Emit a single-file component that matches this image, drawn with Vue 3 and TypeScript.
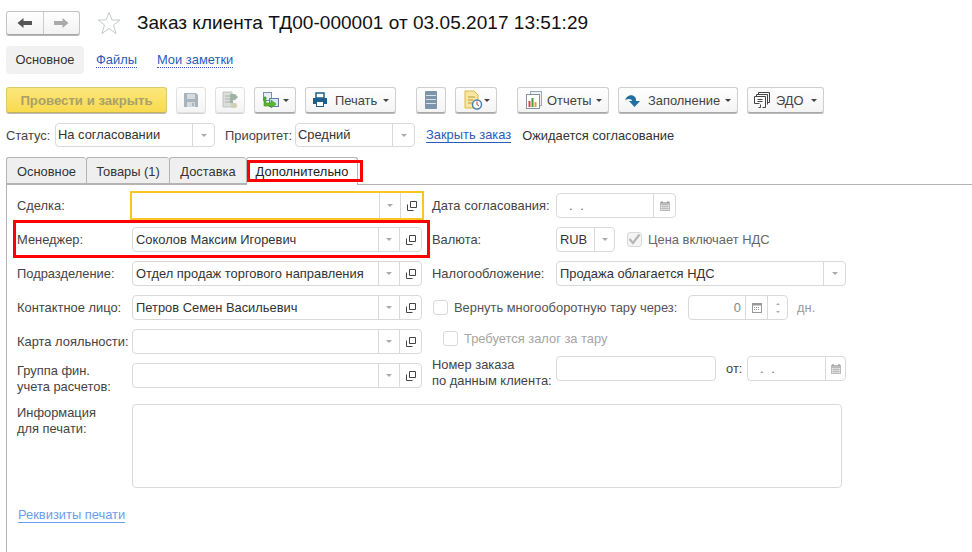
<script setup lang="ts">
const tabs = [
  { label: 'Основное', w: 80 },
  { label: 'Товары (1)', w: 83 },
  { label: 'Доставка', w: 77 },
]
</script>

<template>
  <div class="page">
    <header class="head">
      <div class="nav">
        <button class="nav-btn">
          <svg width="16" height="12" viewBox="0 0 16 12"><path d="M0.5 6 6.5 1V4H15V8H6.500V11Z" fill="#555" /></svg>
        </button>
        <button class="nav-btn">
          <svg width="16" height="12" viewBox="0 0 16 12"><path d="M15.500 6 9.500 1V4H1V8H9.500V11Z" fill="#aaa" /></svg>
        </button>
      </div>
      <svg class="star" width="24" height="24" viewBox="0 0 24 24"><path d="M12 1.500 15 9H23L16.500 14 19 22.500 12 17.500 5 22.500 7.500 14 1 9H9Z" fill="#fff" stroke="#c4c9cc" stroke-width="1" /></svg>
      <h1 class="title">Заказ клиента ТД00-000001 от 03.05.2017 13:51:29</h1>
    </header>

    <nav class="subnav">
      <span class="sub-active">Основное</span>
      <a class="sub-link l1">Файлы</a>
      <a class="sub-link l2">Мои заметки</a>
    </nav>

    <div class="toolbar">
      <button class="btn primary">Провести и закрыть</button>
      <button class="btn icon disabled b-save">
        <svg width="16" height="16" viewBox="0 0 16 16"><path d="M1 1H13L15 3V15H1Z" fill="#a9b3bc" /><rect x="4" y="2" width="8" height="5" fill="#d5dade" /><rect x="4" y="10" width="8" height="5" fill="#d5dade" /><rect x="9" y="11" width="2" height="3" fill="#a9b3bc" /></svg>
      </button>
      <button class="btn icon disabled b-doc">
        <svg width="18" height="18" viewBox="0 0 18 18"><path d="M2 1H11V16H2Z" fill="#d9dedb" stroke="#bcc4c0" /><path d="M4 5H9M4 8H9M4 11H9" stroke="#aab2ae" /><path d="M9 3H14L17 6 14 9H12V12H9Z" fill="#9fb4a6" /><rect x="10" y="12" width="6" height="5" rx="2" fill="#d2cfb4" /></svg>
      </button>
      <button class="btn drop b-link">
        <svg width="18" height="18" viewBox="0 0 18 18"><rect x="1.500" y="1.500" width="8" height="8" fill="#e9eef5" stroke="#7f8fa6" /><rect x="7.500" y="7.500" width="9" height="8" fill="#d9e6f5" stroke="#5b7fa6" /><path d="M4 6V12H9V9L14 13 9 17V15H2V6Z" fill="#58b82e" stroke="#3a8a1a" stroke-width=".6" /></svg>
        <i class="caret" />
      </button>
      <button class="btn drop b-print">
        <svg width="16" height="16" viewBox="0 0 16 16"><rect x="4" y="1" width="8" height="5" fill="#fff" stroke="#1f5f8b" stroke-width="1.500" /><path d="M1 6H15V12H12V9H4V12H1Z" fill="#1f5f8b" /><rect x="4.500" y="9.500" width="7" height="5" fill="#fff" stroke="#1f5f8b" /></svg>
        <span class="b-text">Печать</span>
        <i class="caret" />
      </button>
      <button class="btn icon b-menu">
        <svg width="14" height="20" viewBox="0 0 14 20"><rect x="1" y="1" width="12" height="18" rx="1" fill="#7d95ab" /><path d="M2 5.500H12M2 9.500H12M2 13.500H12" stroke="#d8e2ea" /></svg>
      </button>
      <button class="btn drop b-file">
        <svg width="20" height="20" viewBox="0 0 20 20"><path d="M2 1H11L15 5V18H2Z" fill="#f7e6a0" stroke="#d9b84a" /><path d="M5 7H12M5 10H10M5 13H9" stroke="#b99a3a" /><circle cx="14" cy="14.500" r="4.500" fill="#fff" stroke="#4a80b5" stroke-width="1.500" /><path d="M14 11.500V14.500L16 16" stroke="#c0392b" fill="none" /></svg>
        <i class="caret" />
      </button>
      <button class="btn drop b-rep">
        <svg width="20" height="20" viewBox="0 0 20 20"><rect x="6.500" y="1.500" width="11" height="14" fill="#eef1f5" stroke="#9aa7b5" /><rect x="2.500" y="4.500" width="13" height="14" fill="#fff" stroke="#8293a5" /><rect x="4.500" y="11" width="2" height="6" fill="#d04a3a" /><rect x="7.500" y="8" width="2" height="9" fill="#4d9a3a" /><rect x="10.500" y="12" width="2" height="5" fill="#d9a52e" /></svg>
        <span class="b-text t-rep">Отчеты</span>
        <i class="caret" />
      </button>
      <button class="btn drop b-fill">
        <svg width="16" height="15" viewBox="0 0 16 15"><path d="M0 7C2 2 7 1 10 4 11 5 11 6 11 8H15L9.500 14 4 8H7C7 6 4 5 0 7Z" fill="#1f6f9f" /></svg>
        <span class="b-text">Заполнение</span>
        <i class="caret" />
      </button>
      <button class="btn drop b-edo">
        <svg width="18" height="18" viewBox="0 0 18 18" fill="none" stroke="#444"><path d="M4.500 3.500V1.500H15.500V11.500H13.500" /><path d="M2.500 5.500V3.500H13.500V13.500" /><path d="M.5 12.500V5.500H11.500V16.500H8.500M.5 12.500H5.500M3.500 8.500H8.500M3.500 10.500H8.500" /><path d="M6.500 13.500V16.500H4.500" /></svg>
        <span class="b-text t-edo">ЭДО</span>
        <i class="caret" />
      </button>
    </div>

    <div class="status">
      <span class="lbl s1">Статус:</span>
      <div class="field st-a"><span class="val">На согласовании</span><span class="fb w22"><i class="mini" /></span></div>
      <span class="lbl s2">Приоритет:</span>
      <div class="field st-b"><span class="val">Средний</span><span class="fb w22"><i class="mini" /></span></div>
      <a class="close-link">Закрыть заказ</a>
      <span class="state">Ожидается согласование</span>
    </div>

    <div class="tabs">
      <div v-for="t in tabs" :key="t.label" class="tab" :style="{ width: t.w + 'px' }">{{ t.label }}</div>
      <div class="tab active">
        Дополнительно
        <span class="mark-tab" />
      </div>
    </div>

    <section class="panel">
      <div class="form">
        <div class="col left">
          <div class="row">
            <label class="name">Сделка:</label>
            <div class="field main focus">
              <span class="val" />
              <span class="fb w21"><i class="mini" /></span>
              <span class="fb w22"><svg class="open" width="10" height="10" viewBox="0 0 10 10"><path d="M3.500 .5H9.500V6.500H3.500ZM.5 3.500V9.500H6.500" fill="none" stroke="#444" /></svg></span>
            </div>
          </div>
          <div class="row manager">
            <label class="name">Менеджер:</label>
            <div class="field main">
              <span class="val">Соколов Максим Игоревич</span>
              <span class="fb w21"><i class="mini" /></span>
              <span class="fb w22"><svg class="open" width="10" height="10" viewBox="0 0 10 10"><path d="M3.500 .5H9.500V6.500H3.500ZM.5 3.500V9.500H6.500" fill="none" stroke="#444" /></svg></span>
            </div>
            <span class="mark-row" />
          </div>
          <div class="row">
            <label class="name">Подразделение:</label>
            <div class="field main">
              <span class="val">Отдел продаж торгового направления</span>
              <span class="fb w21"><i class="mini" /></span>
              <span class="fb w22"><svg class="open" width="10" height="10" viewBox="0 0 10 10"><path d="M3.500 .5H9.500V6.500H3.500ZM.5 3.500V9.500H6.500" fill="none" stroke="#444" /></svg></span>
            </div>
          </div>
          <div class="row">
            <label class="name">Контактное лицо:</label>
            <div class="field main">
              <span class="val">Петров Семен Васильевич</span>
              <span class="fb w21"><i class="mini" /></span>
              <span class="fb w22"><svg class="open" width="10" height="10" viewBox="0 0 10 10"><path d="M3.500 .5H9.500V6.500H3.500ZM.5 3.500V9.500H6.500" fill="none" stroke="#444" /></svg></span>
            </div>
          </div>
          <div class="row">
            <label class="name">Карта лояльности:</label>
            <div class="field main">
              <span class="val" />
              <span class="fb w21"><i class="mini" /></span>
              <span class="fb w22"><svg class="open" width="10" height="10" viewBox="0 0 10 10"><path d="M3.500 .5H9.500V6.500H3.500ZM.5 3.500V9.500H6.500" fill="none" stroke="#444" /></svg></span>
            </div>
          </div>
          <div class="row">
            <label class="name two low">Группа фин.<br />учета расчетов:</label>
            <div class="field main">
              <span class="val" />
              <span class="fb w21"><i class="mini" /></span>
              <span class="fb w22"><svg class="open" width="10" height="10" viewBox="0 0 10 10"><path d="M3.500 .5H9.500V6.500H3.500ZM.5 3.500V9.500H6.500" fill="none" stroke="#444" /></svg></span>
            </div>
          </div>
        </div>

        <div class="col right">
          <div class="row">
            <label class="rname">Дата согласования:</label>
            <div class="field date1">
              <span class="val dots">. .</span>
              <span class="fb w22"><svg width="12" height="12" viewBox="0 0 12 12"><rect x="1" y="2" width="10" height="9" fill="#bbb" /><path d="M3 1V3M9 1V3" stroke="#888" /><rect x="2" y="5" width="8" height="5" fill="#eee" /><path d="M2 6.500H10M2 8.500H10M4 5V10M6 5V10M8 5V10" stroke="#aaa" stroke-width=".6" /></svg></span>
            </div>
          </div>
          <div class="row">
            <label class="rname">Валюта:</label>
            <div class="field cur">
              <span class="val">RUB</span>
              <span class="fb w20"><i class="mini" /></span>
            </div>
            <span class="check c-price">
              <svg width="13" height="13" viewBox="0 0 13 13"><path d="M1.500 6 5 10 11.500 1.500" fill="none" stroke="#b5b5b5" stroke-width="2.200" /></svg>
            </span>
            <span class="chk-text">Цена включает НДС</span>
          </div>
          <div class="row">
            <label class="rname">Налогообложение:</label>
            <div class="field tax">
              <span class="val">Продажа облагается НДС</span>
              <span class="fb w22"><i class="mini" /></span>
            </div>
          </div>
          <div class="row">
            <span class="check c-ret" />
            <span class="ret-text">Вернуть многооборотную тару через:</span>
            <div class="field days">
              <span class="val num">0</span>
              <span class="fb w22"><svg width="12" height="12" viewBox="0 0 12 12"><rect x="1.500" y="1.500" width="9" height="9" fill="#fff" stroke="#999" /><rect x="1" y="1" width="10" height="2.500" fill="#999" /><path d="M3 5.500H9M3 7.500H9" stroke="#999" stroke-dasharray="1 1" /></svg></span>
              <span class="fb spin"><i class="up" /><i class="down" /></span>
            </div>
            <span class="unit">дн.</span>
          </div>
          <div class="row deposit">
            <span class="check c-dep" />
            <span class="dep-text">Требуется залог за тару</span>
          </div>
          <div class="row order">
            <label class="rname two lower">Номер заказа<br />по данным клиента:</label>
            <div class="field ordno"><span class="val" /></div>
            <span class="from">от:</span>
            <div class="field date2">
              <span class="val dots">. .</span>
              <span class="fb w20"><svg width="12" height="12" viewBox="0 0 12 12"><rect x="1" y="2" width="10" height="9" fill="#bbb" /><path d="M3 1V3M9 1V3" stroke="#888" /><rect x="2" y="5" width="8" height="5" fill="#eee" /><path d="M2 6.500H10M2 8.500H10M4 5V10M6 5V10M8 5V10" stroke="#aaa" stroke-width=".6" /></svg></span>
            </div>
          </div>
        </div>
      </div>

      <div class="info">
        <label class="name two top">Информация<br />для печати:</label>
        <div class="area" />
      </div>
      <a class="req">Реквизиты печати</a>
    </section>
  </div>
</template>

<style>
html, body { margin: 0; background: #fff; }
</style>

<style scoped>
.page {
  width: 972px;
  height: 552px;
  overflow: hidden;
  background: #fff;
  font-family: "Liberation Sans", Arial, sans-serif;
  font-size: 12.900px;
  color: #333;
  box-sizing: border-box;
}
button { font: inherit; margin: 0; padding: 0; }
.head { display: flex; align-items: center; height: 24px; padding: 11px 0 0 6px; }
.nav {
  display: flex; width: 74px; height: 24px; box-sizing: border-box;
  border: 1px solid #c4c4c4; border-bottom-color: #a9a9a9; border-radius: 3px;
  box-shadow: 0 1px 0 #b5b5b5;
  background: linear-gradient(#fff, #f2f2f2);
}
.nav-btn { flex: 1; display: flex; align-items: center; justify-content: center; border: 0; background: none; }
.nav-btn + .nav-btn { border-left: 1px solid #ccc; }
.star { margin-left: 17px; }
.title { margin: 0 0 0 16px; font-size: 19px; font-weight: 400; letter-spacing: .04px; color: #111; white-space: nowrap; }

.subnav { display: flex; align-items: center; height: 28px; margin: 11px 0 0 6px; }
.sub-active { width: 78px; height: 28px; line-height: 28px; text-align: center; background: #f1f1f1; border-radius: 4px; }
.sub-link { color: #2a5cba; border-bottom: 1px dotted #2a5cba; line-height: 14px; }
.l1 { margin-left: 12px; }
.l2 { margin-left: 20px; }

.toolbar { display: flex; height: 26px; margin: 13px 0 0 6px; }
.btn {
  display: flex; align-items: center; box-sizing: border-box; height: 26px;
  border: 1px solid #cfcfcf; border-bottom-color: #a8a8a8; border-radius: 3px;
  background: linear-gradient(#fff, #f4f4f4);
  box-shadow: 0 1px 0 #bbb;
  color: #444; white-space: nowrap;
}
.primary {
  width: 161px; justify-content: center; font-weight: 700; font-size: 13.200px; color: #a9a06a;
  background: linear-gradient(#fbe77c, #f9db4f); border-color: #ddca6a; border-bottom-color: #c4b15a;
}
.icon { width: 30px; justify-content: center; }
.disabled { border-color: #e0e0e0; box-shadow: 0 1px 0 #d4d4d4; }
.drop { padding-left: 6px; }
.b-save { margin-left: 9px; }
.b-doc { margin-left: 9px; }
.b-link { margin-left: 9px; width: 42px; padding-left: 7px; }
.b-print { margin-left: 9px; width: 91px; }
.b-menu { margin-left: 20px; }
.b-file { margin-left: 9px; width: 42px; padding-left: 7px; }
.b-rep { margin-left: 20px; width: 92px; }
.b-fill { margin-left: 9px; width: 120px; }
.b-edo { margin-left: 9px; width: 77px; }
.b-text { margin-left: 7px; }
.t-rep { margin-left: 3px; }
.t-edo { margin-left: 4px; }
.caret { width: 0; height: 0; margin-left: auto; margin-right: 6px; border: 3px solid transparent; border-top: 3px solid #444; border-bottom: 0; }

.field {
  display: flex; box-sizing: border-box; height: 25px;
  border: 1px solid #d9d9d9; border-radius: 4px; background: #fff;
}
.val { flex: 1; min-width: 0; padding-left: 3px; line-height: 23px; white-space: nowrap; color: #333; }
.fb { display: flex; align-items: center; justify-content: center; border-left: 1px solid #d9d9d9; box-sizing: border-box; flex: none; }
.w20 { width: 20px; }
.w21 { width: 21px; }
.w22 { width: 22px; }
.mini { width: 0; height: 0; border: 3px solid transparent; border-top: 3px solid #aaa; border-bottom: 0; }
.lbl { color: #444; flex: none; white-space: nowrap; }

.status { display: flex; align-items: center; height: 24px; margin: 10px 0 0 6px; }
.status .field { height: 24px; }
.status .val { line-height: 22px; padding-left: 2px; }
.s1 { width: 49px; }
.st-a { width: 160px; }
.s2 { margin-left: 10px; width: 70px; }
.st-b { width: 120px; }
.close-link { margin-left: 11px; color: #2a5cba; border-bottom: 1px solid #2a5cba; line-height: 14px; white-space: nowrap; }
.state { margin-left: 11px; color: #333; white-space: nowrap; }

.tabs { display: flex; height: 28px; margin: 10px 0 0 6px; position: relative; z-index: 1; }
.tab {
  box-sizing: border-box; height: 27px; line-height: 27px; text-align: center;
  border: 1px solid #b4b4b4; border-bottom: 1px solid #b4b4b4; border-right: 0; border-radius: 3px 3px 0 0;
  background: #efefef; color: #333;
}
.tab.active {
  position: relative; width: 112px; height: 28px; background: #fff;
  border-right: 1px solid #b4b4b4; border-bottom: 0; color: #222;
}
.mark-tab { position: absolute; left: 0; top: 2px; width: 116px; height: 22px; box-sizing: border-box; border: 3px solid #f00; }

.panel {
  margin: -1px 0 0 6px; height: 368px; box-sizing: border-box;
  border-left: 1px solid #b4b4b4; border-top: 1px solid #b4b4b4;
  padding: 8px 0 0 10px;
}
.form { display: flex; }
.col { display: flex; flex-direction: column; gap: 9px; }
.left { width: 405px; }
.right { margin-left: 10px; }
.row { display: flex; align-items: center; height: 25px; position: relative; }
.name { width: 115px; flex: none; color: #444; white-space: nowrap; }
.two { line-height: 16px; }
.low { margin-top: 7px; }
.lower { margin-top: 9px; }
.top { margin-top: 1px; }
.main { width: 290px; }
.focus { border: 0; border-radius: 0; outline: 2px solid #f9c523; outline-offset: 0; height: 25px; }
.focus .fb { border-left-color: #d9d9d9; }
.mark-row { position: absolute; left: -4px; top: -7px; width: 417px; height: 38px; box-sizing: border-box; border: 3px solid #f00; pointer-events: none; }

.rname { width: 124px; flex: none; color: #444; white-space: nowrap; }
.date1 { width: 120px; }
.dots { padding-left: 12px; color: #666; letter-spacing: 2px; }
.cur { width: 59px; }
.check { box-sizing: border-box; width: 15px; height: 15px; border: 1px solid #d9d9d9; border-radius: 3px; background: #fff; display: inline-flex; align-items: center; justify-content: center; flex: none; }
.c-price { margin-left: 12px; background: #f4f4f4; }
.chk-text { margin-left: 6px; color: #666; white-space: nowrap; }
.tax { width: 290px; }
.c-ret { margin-left: 1px; }
.ret-text { margin-left: 6px; width: 234px; flex: none; color: #555; white-space: nowrap; }
.days { width: 100px; }
.num { text-align: right; padding-right: 4px; color: #888; }
.spin { width: 20px; flex-direction: column; gap: 6px; }
.up, .down { width: 0; height: 0; border: 2px solid transparent; }
.up { border-bottom: 2px solid #aaa; border-top: 0; }
.down { border-top: 2px solid #aaa; border-bottom: 0; }
.unit { margin-left: 9px; color: #999; }
.deposit { height: 15px; margin-top: 2px; }
.c-dep { margin-left: 11px; }
.dep-text { margin-left: 6px; color: #a6a6a6; white-space: nowrap; }
.order { margin-top: 1px; }
.ordno { width: 160px; }
.from { margin-left: 10px; width: 21px; flex: none; color: #444; }
.date2 { width: 99px; }

.info { display: flex; margin-top: 16px; }
.area { width: 710px; height: 84px; box-sizing: border-box; border: 1px solid #d9d9d9; border-radius: 4px; }
.req { display: inline-block; margin: 20px 0 0 1px; color: #6b9df0; border-bottom: 1px solid #6b9df0; line-height: 14px; }
</style>
